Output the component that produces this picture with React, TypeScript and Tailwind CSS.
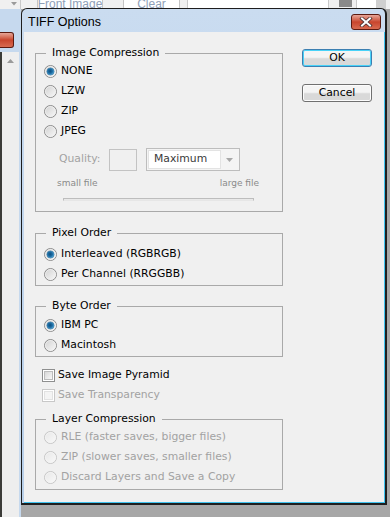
import { useId } from 'react'

function Radio({ checked = false, disabled = false }: { checked?: boolean; disabled?: boolean }) {
  const id = useId().replace(/:/g, '')
  return (
    <svg width="13" height="13" viewBox="0 0 13 13" className="shrink-0">
      <defs>
        <linearGradient id={`${id}f`} x1="0" y1="0" x2="1" y2="1">
          <stop offset="0" stopColor={disabled ? '#e6e6e6' : '#cfcfcf'} />
          <stop offset="1" stopColor={disabled ? '#fafafa' : '#fbfbfb'} />
        </linearGradient>
        <radialGradient id={`${id}d`} cx="0.45" cy="0.45" r="0.6">
          <stop offset="0" stopColor="#0c4e7e" />
          <stop offset="0.55" stopColor="#1f6fa6" />
          <stop offset="1" stopColor="#6cc0ec" />
        </radialGradient>
      </defs>
      <circle cx="6.5" cy="6.5" r="6" fill={`url(#${id}f)`} stroke={disabled ? '#c6c6c6' : '#8d8d8d'} />
      <circle cx="6.5" cy="6.5" r="5" fill="none" stroke={disabled ? '#f4f4f4' : '#f0f0f0'} strokeWidth="0.8" />
      {checked && <circle cx="6.5" cy="6.5" r="3.6" fill={`url(#${id}d)`} stroke="#2a6e9c" strokeWidth="0.6" />}
    </svg>
  )
}

function Checkbox({ disabled = false }: { disabled?: boolean }) {
  return (
    <div
      className={`flex size-[13px] shrink-0 items-center justify-center border ${disabled ? 'border-[#c8c8c8]' : 'border-[#8e8f8f]'} bg-white`}
    >
      <div
        className={`size-[9px] border ${disabled ? 'border-[#e2e2e2] bg-[#f4f4f4]' : 'border-[#bcbcbc] bg-gradient-to-br from-[#d8d8d8] to-[#f8f8f8]'}`}
      />
    </div>
  )
}

function RadioRow({
  label,
  checked,
  disabled,
}: {
  label: string
  checked?: boolean
  disabled?: boolean
}) {
  return (
    <div className="flex h-5 items-center gap-[4px]">
      <Radio checked={checked} disabled={disabled} />
      <span className={disabled ? 'text-[#a2a2a2]' : 'text-black'}>{label}</span>
    </div>
  )
}

function Group({
  title,
  className,
  children,
}: {
  title: string
  className?: string
  children: React.ReactNode
}) {
  return (
    <fieldset className={`border border-[#a9a9a9] pl-[8px] ${className ?? ''}`}>
      <legend className="ml-[2px] px-[6px] leading-[14px] text-black">{title}</legend>
      {children}
    </fieldset>
  )
}

function CloseButton() {
  return (
    <div className="mt-[2px] flex h-[16px] w-[30px] items-center justify-center rounded-[3px] border border-[#5c1a10] bg-gradient-to-b from-[#e6a597] via-[#c8452d] to-[#d86a50]">
      <svg width="14" height="10" viewBox="0 0 14 10">
        <path d="M3 1.5 L11 8.5 M11 1.5 L3 8.5" stroke="#4a3030" strokeWidth="3.6" strokeLinecap="square" />
        <path d="M3 1.5 L11 8.5 M11 1.5 L3 8.5" stroke="#ffffff" strokeWidth="2" strokeLinecap="square" />
      </svg>
    </div>
  )
}

function DialogButton({ label, isDefault }: { label: string; isDefault?: boolean }) {
  return (
    <button
      className={`flex h-[18px] w-[70px] items-center justify-center rounded-[3px] border bg-gradient-to-b from-[#f4f4f4] from-45% to-[#d9d9d9] to-55% leading-none text-black ${isDefault ? 'border-[#3c7fb1] shadow-[inset_0_0_0_1px_#48d2f8]' : 'border-[#707070] shadow-[inset_0_0_0_1px_#fcfcfc]'}`}
    >
      {label}
    </button>
  )
}

export default function App() {
  return (
    <div className="relative h-[517px] w-[390px] overflow-hidden bg-[#a7a7a7] font-['DejaVu_Sans',sans-serif] text-[10.8px]">
      {/* background: toolbar of the window behind */}
      <div className="flex h-[9px] items-start bg-[#f0f0f0]">
        <div className="flex h-full w-[21px] justify-end border-r border-[#c9c9c9] pr-[3px]">
          <svg width="6" height="4" viewBox="0 0 6 4" className="mt-[2px]">
            <path d="M0 0 L6 0 L3 3.5 Z" fill="#9a9a9a" />
          </svg>
        </div>
        <div className="ml-[16px] flex h-full w-[66px] items-end justify-center overflow-hidden rounded-b-[2px] border border-t-0 border-[#c4c4c4] bg-white font-['Liberation_Sans',sans-serif] text-[12px] leading-[12px] whitespace-nowrap text-[#8fa0b8]">
          <span className="-mb-[2px]">Front Image</span>
        </div>
        <div className="ml-[20px] flex h-full w-[57px] items-end justify-center overflow-hidden rounded-b-[2px] border border-t-0 border-[#c4c4c4] bg-white font-['Liberation_Sans',sans-serif] text-[12px] leading-[12px] whitespace-nowrap text-[#8fa0b8]">
          <span className="-mb-[2px]">Clear</span>
        </div>
        <div className="ml-[7px] h-full w-[142px] border-r border-l border-[#c9c9c9] bg-white" />
        <div className="ml-[10px] h-[7px] w-[13px] bg-[#8a8a8a]" />
        <div className="ml-[4px] h-full w-[20px] border-l border-[#c9c9c9] bg-white" />
        <div className="h-full w-[10px] bg-[#cfcfcf]" />
      </div>

      {/* background: left edge of the window behind */}
      <div className="flex h-[508px] w-[21px] flex-col bg-[#c6d9ee]">
        <div className="h-[23px]" />
        <div className="h-[16px] w-[14px] rounded-r-[3px] border border-l-0 border-[#5c1a10] bg-gradient-to-b from-[#e6a597] via-[#c8452d] to-[#d86a50]" />
        <div className="h-[4px]" />
        <div className="flex flex-1">
          <div className="w-[2px] bg-[#3b3b38]" />
          <div className="flex w-[17px] flex-col items-center bg-[#eeeeee] pt-[7px]">
            <svg width="7" height="4" viewBox="0 0 7 4">
              <path d="M0 4 L3.5 0 L7 4 Z" fill="#9a9a9a" />
            </svg>
          </div>
        </div>
      </div>

      {/* TIFF Options dialog */}
      <div className="absolute top-[8px] left-[21px] flex h-[497px] w-[366px] flex-col rounded-t-[6px] border border-r-2 border-b-2 border-[#1e1e1e] bg-gradient-to-b from-[#cadcf0] to-[#b8cfe9]">
        <div className="flex h-[23px] shrink-0 items-center justify-between pr-[4px] pl-[6px]">
          <span className="mt-[4px] font-['Liberation_Sans',sans-serif] text-[12.5px] text-black">TIFF Options</span>
          <CloseButton />
        </div>
        <div className="ml-[2px] flex flex-1 border-r border-b border-[#3fc2ee] bg-[#f0f0f0] pt-[14px] pl-[11px]">
          {/* left column */}
          <div className="flex w-[248px] flex-col">
            <Group title="Image Compression" className="pb-[10px]">
              <div className="flex flex-col pt-[1px]">
                <RadioRow label="NONE" checked />
                <RadioRow label="LZW" />
                <RadioRow label="ZIP" />
                <RadioRow label="JPEG" />
              </div>
              <div className="mt-[7px] flex h-[23px] items-center">
                <span className="ml-[15px] w-[50px] text-[#a2a2a2]">Quality:</span>
                <div className="h-[22px] w-[28px] border border-[#c3c3c3] bg-[#f0f0f0]" />
                <div className="ml-[9px] flex h-[23px] w-[94px] items-center border border-[#bdbdbd] bg-[#f4f4f4] p-[1px]">
                  <div className="flex h-full w-[73px] items-center border border-[#e3e3e3] bg-white pl-[5px] text-[#3a3a3a]">
                    Maximum
                  </div>
                  <div className="flex flex-1 items-center justify-center">
                    <svg width="7" height="4" viewBox="0 0 7 4">
                      <path d="M0 0 L7 0 L3.5 4 Z" fill="#a8a8a8" />
                    </svg>
                  </div>
                </div>
              </div>
              <div className="mt-[7px] flex h-[12px] w-[215px] items-center justify-between pl-[13px] text-[9px] text-[#8a8a8a]">
                <span>small file</span>
                <span>large file</span>
              </div>
              <div className="mt-[8px] ml-[19px] h-[3px] w-[191px] border border-[#bdbdbd] border-b-[#e6e6e6] bg-[#e9e9e9]" />
            </Group>

            <Group title="Pixel Order" className="mt-[14px] pb-[1px]">
              <div className="flex flex-col pt-[4px]">
                <RadioRow label="Interleaved (RGBRGB)" checked />
                <RadioRow label="Per Channel (RRGGBB)" />
              </div>
            </Group>

            <Group title="Byte Order" className="mt-[13px] pb-[1px]">
              <div className="flex flex-col pt-[2px]">
                <RadioRow label="IBM PC" checked />
                <RadioRow label="Macintosh" />
              </div>
            </Group>

            <div className="mt-[8px] flex flex-col pl-[7px]">
              <div className="flex h-5 items-center gap-[3px]">
                <Checkbox />
                <span className="text-black">Save Image Pyramid</span>
              </div>
              <div className="flex h-5 items-center gap-[3px]">
                <Checkbox disabled />
                <span className="text-[#a2a2a2]">Save Transparency</span>
              </div>
            </div>

            <Group title="Layer Compression" className="mt-[7px] pb-[2px]">
              <div className="flex flex-col pt-[1px]">
                <RadioRow label="RLE (faster saves, bigger files)" disabled />
                <RadioRow label="ZIP (slower saves, smaller files)" disabled />
                <RadioRow label="Discard Layers and Save a Copy" disabled />
              </div>
            </Group>
          </div>

          {/* right column */}
          <div className="ml-[19px] flex flex-col gap-[17px] pt-[3px]">
            <DialogButton label="OK" isDefault />
            <DialogButton label="Cancel" />
          </div>
        </div>
      </div>
    </div>
  )
}
